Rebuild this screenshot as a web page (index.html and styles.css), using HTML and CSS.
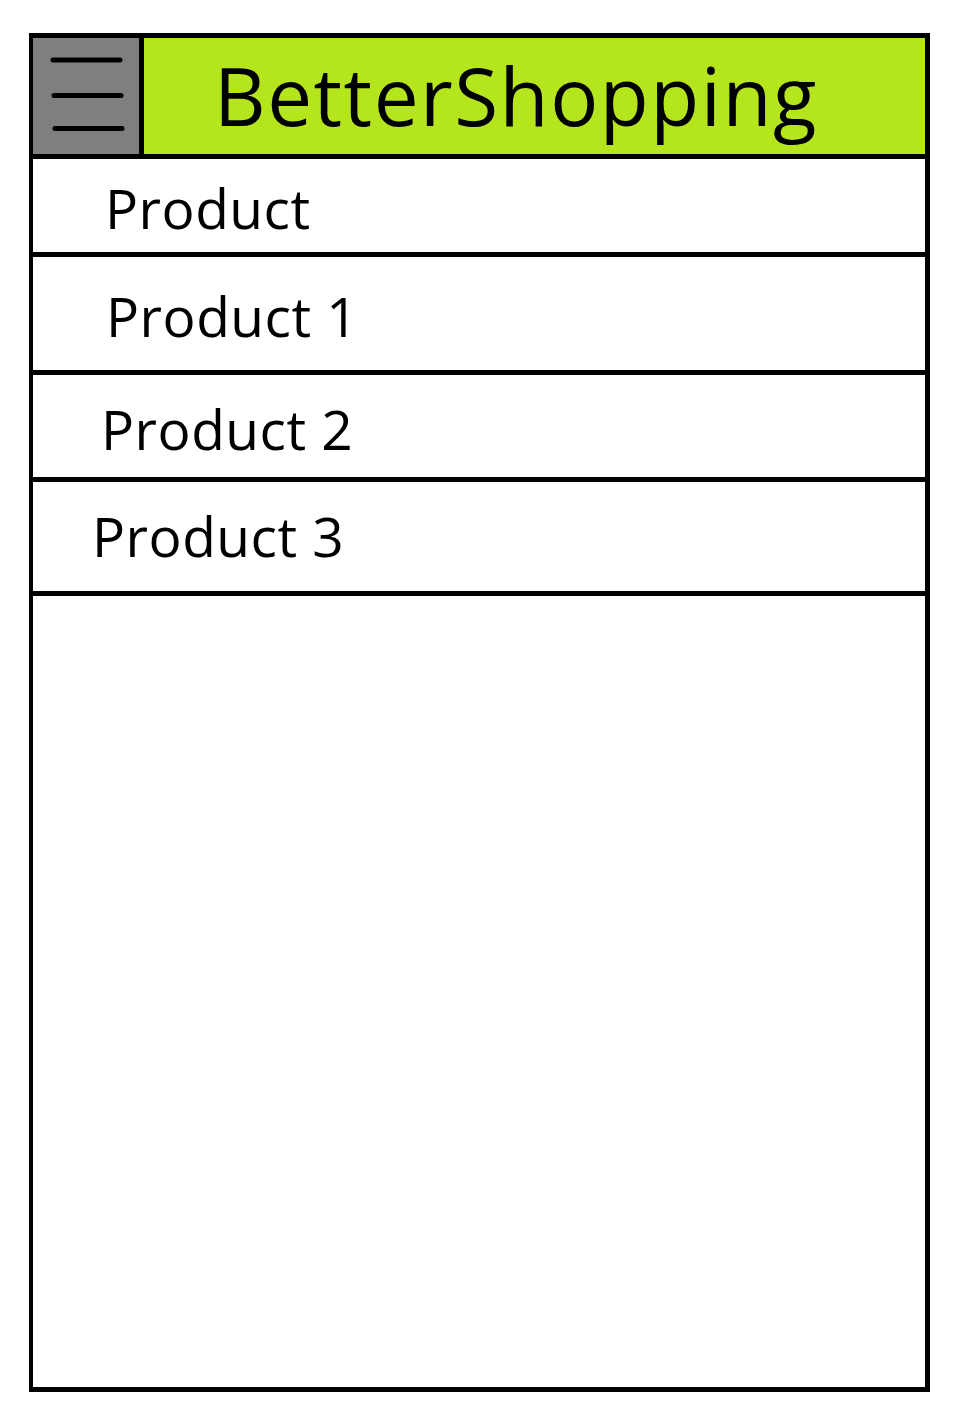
FILE: index.html
```html
<!DOCTYPE html>
<html lang="en">
<head>
    <meta charset="UTF-8">
    <meta name="viewport" content="width=device-width, initial-scale=1.0">
    <title>BetterShopping</title>
    <link rel="stylesheet" href="styles.css">
</head>
<body>
    <div class="phone">
        <div class="header">
            <div class="menu-btn">
                <svg width="106" height="116" viewBox="0 0 106 116">
                    <g stroke="#000" stroke-width="5" stroke-linecap="round">
                        <line x1="20" y1="22" x2="87" y2="22"/>
                        <line x1="21" y1="57.5" x2="88" y2="57.5"/>
                        <line x1="22" y1="90.5" x2="89" y2="90.5"/>
                    </g>
                </svg>
            </div>
            <div class="title">BetterShopping</div>
        </div>
        <div class="list">
            <div class="item item-head">Product</div>
            <div class="item item-1">Product 1</div>
            <div class="item item-2">Product 2</div>
            <div class="item item-3">Product 3</div>
        </div>
    </div>
</body>
</html>
```

FILE: styles.css
```css
body {
    margin: 0;
    background: white;
    font-family: "Open Sans", Arial, sans-serif;
    color: black;
}
.phone {
    box-sizing: border-box;
    width: 901px;
    height: 1359px;
    margin: 33px 0 0 29px;
    border: 5px solid black;
    border-left-width: 4px;
    display: flex;
    flex-direction: column;
}
.header {
    display: flex;
    height: 116px;
    border-bottom: 5px solid black;
}
.menu-btn {
    width: 106px;
    background-color: #7f7f7f;
    border-right: 5px solid black;
}
.menu-btn svg {
    display: block;
}
.title {
    flex: 1;
    background-color: #b5e61d;
    font-size: 80px;
    line-height: 80px;
    font-weight: 500;
    letter-spacing: 1.5px;
    padding: 17px 0 0 70px;
}
.list {
    display: flex;
    flex-direction: column;
}
.item {
    border-bottom: 5px solid black;
    font-size: 55px;
    line-height: 55px;
    font-weight: 500;
    letter-spacing: 0.5px;
    box-sizing: border-box;
}
/* cada fila tiene su altura y sangria, como en el boceto */
.item-head {
    height: 98px;
    padding: 21px 0 0 72px;
}
.item-1 {
    height: 118px;
    padding: 31px 0 0 73px;
}
.item-2 {
    height: 107px;
    padding: 26px 0 0 68px;
}
.item-3 {
    height: 114px;
    padding: 26px 0 0 59px;
}
```
